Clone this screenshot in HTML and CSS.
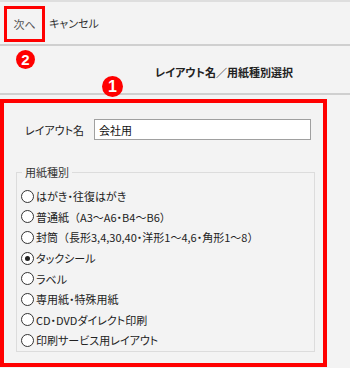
FILE: index.html
```html
<!DOCTYPE html>
<html lang="ja">
<head>
  <meta charset="UTF-8" />
  <meta name="viewport" content="width=device-width, initial-scale=1.0" />
  <title>レイアウト名／用紙種別選択</title>
  <link rel="stylesheet" href="styles.css">
</head>
<body>
  <div class="toolbar">
    <button class="tool next">次へ</button>
    <button class="tool">キャンセル</button>
    <span class="badge badge-two">2</span>
  </div>

  <div class="header">
    <h1 class="title">レイアウト名／用紙種別選択</h1>
    <span class="badge badge-one">1</span>
  </div>

  <div class="frame">
    <div class="name-row">
      <label class="name-label" for="layoutName">レイアウト名</label>
      <input type="text" id="layoutName" class="name-input" value="会社用" />
    </div>

    <fieldset class="paper">
      <legend>用紙種別</legend>
      <div class="opt"><span class="radio"></span>はがき・往復はがき</div>
      <div class="opt"><span class="radio"></span>普通紙<span class="fw">（</span>A3～A6・B4～B6<span class="fw">）</span></div>
      <div class="opt"><span class="radio"></span>封筒<span class="fw">（</span>長形3,4,30,40・洋形1～4,6・角形1～8<span class="fw">）</span></div>
      <div class="opt"><span class="radio checked"></span>タックシール</div>
      <div class="opt"><span class="radio"></span>ラベル</div>
      <div class="opt"><span class="radio"></span>専用紙・特殊用紙</div>
      <div class="opt"><span class="radio"></span>CD・DVDダイレクト印刷</div>
      <div class="opt"><span class="radio"></span>印刷サービス用レイアウト</div>
    </fieldset>
  </div>
</body>
</html>
```

FILE: styles.css
```css
body {
  margin: 0;
  background: #f3f3f3;
  color: #222;
  font-family: "Noto Sans CJK JP", "Noto Sans", sans-serif;
  font-size: 11px;
  font-feature-settings: "palt";
}

.toolbar {
  position: relative;
  display: flex;
  align-items: center;
  height: 42px;
  padding-left: 4px;
  border-top: 2px solid #dedede;
  border-bottom: 2px solid #cfcfcf;
}

.tool {
  background: none;
  border: none;
  padding: 0;
  font: inherit;
  font-feature-settings: "palt";
  color: #333;
}

.next {
  width: 41px;
  height: 36px;
  margin-top: 2px;
  border: 3px solid #ff0000;
  margin-right: 4px;
  color: #555;
}

.header {
  position: relative;
  height: 47px;
  border-bottom: 2px solid #cfcfcf;
}

.title {
  margin: 0;
  padding: 17px 0 0 155px;
  font-size: 11px;
  font-weight: bold;
  line-height: 18px;
}

.badge {
  position: absolute;
  display: flex;
  align-items: center;
  justify-content: center;
  border-radius: 50%;
  background: #ff0000;
  color: #fff;
  font-family: "Liberation Sans", Arial, sans-serif;
  font-weight: bold;
}

.badge-two {
  left: 16px;
  top: 48px;
  width: 19px;
  height: 19px;
  font-size: 15px;
}

.badge-one {
  left: 102px;
  top: 30px;
  width: 21px;
  height: 21px;
  font-size: 16px;
}

.frame {
  box-sizing: border-box;
  width: 327px;
  height: 268px;
  margin-top: 4px;
  border: 4px solid #ff0000;
  padding: 16px 0 0 21px;
}

.name-row {
  display: flex;
  align-items: center;
}

.name-label {
  width: 69px;
}

.name-input {
  box-sizing: border-box;
  width: 217px;
  height: 21px;
  margin: 0;
  padding: 0 4px;
  border: 1px solid #a0a0a0;
  background: #fff;
  font: inherit;
  font-feature-settings: "palt";
  color: #111;
}

.paper {
  box-sizing: border-box;
  width: 299px;
  height: 188px;
  margin: 24px 0 0 -9px;
  padding: 6px 0 0 4px;
  border: 1px solid #dcdcdc;
}

.paper legend {
  padding: 0 3px;
  margin-left: 1px;
  color: #333;
}

.opt {
  display: flex;
  align-items: center;
  height: 20.6px;
}

.fw {
  font-feature-settings: normal;
}

.radio {
  box-sizing: border-box;
  display: flex;
  align-items: center;
  justify-content: center;
  width: 13px;
  height: 13px;
  margin-right: 2px;
  border: 1px solid #333;
  border-radius: 50%;
  background: #fff;
}

.radio.checked::after {
  content: "";
  width: 5px;
  height: 5px;
  border-radius: 50%;
  background: #222;
}
```
